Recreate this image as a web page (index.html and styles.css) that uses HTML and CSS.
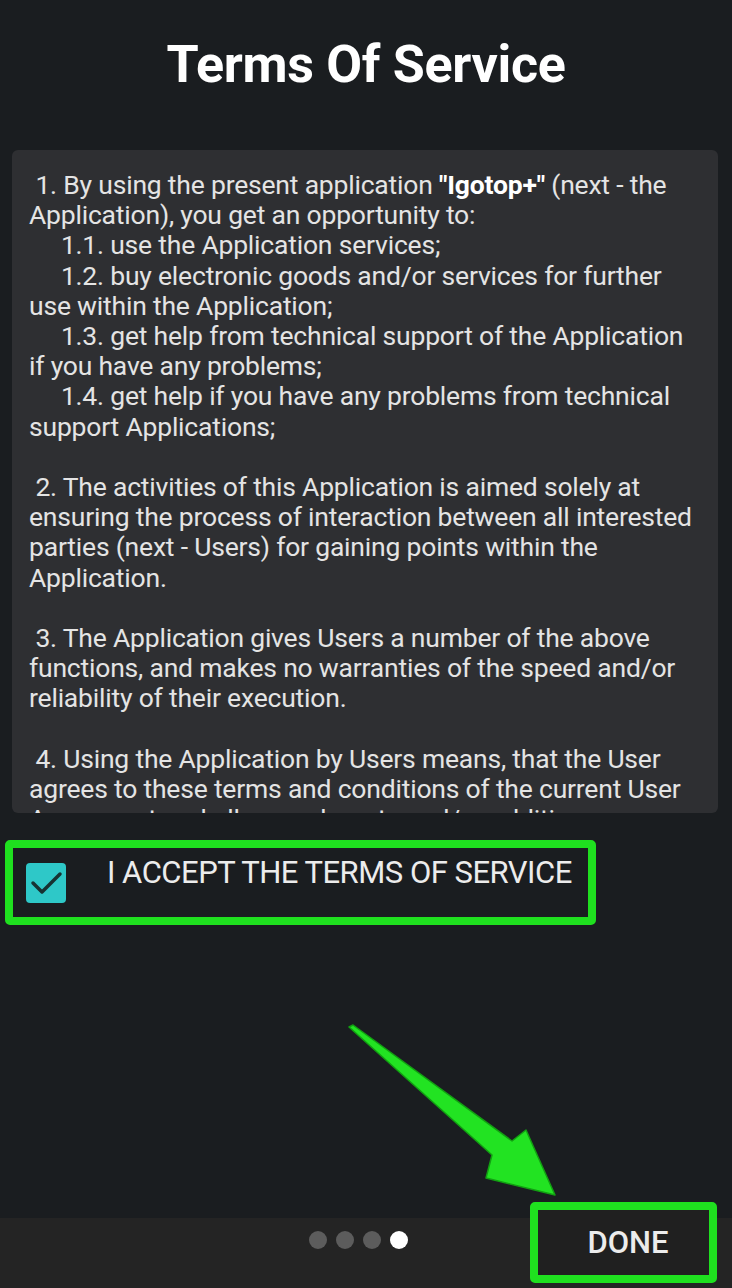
FILE: index.html
```html
<!DOCTYPE html>
<html lang="en">
<head>
  <meta charset="UTF-8" />
  <meta name="viewport" content="width=device-width, initial-scale=1.0"/>
  <title>Terms Of Service</title>
  <link rel="stylesheet" href="styles.css">
</head>
<body>
  <main class="tela">
    <h1 class="titulo">Terms Of Service</h1>

    <div class="termos-box">
      <p class="termos-texto"> 1. By using the present application <b>"Igotop+"</b> (next - the Application), you get an opportunity to:
     1.1. use the Application services;
     1.2. buy electronic goods and/or services for further use within the Application;
     1.3. get help from technical support of the Application if you have any problems;
     1.4. get help if you have any problems from technical support Applications;

 2. The activities of this Application is aimed solely at ensuring the process of interaction between all interested parties (next - Users) for gaining points within the Application.

 3. The Application gives Users a number of the above functions, and makes no warranties of the speed and/or reliability of their execution.

 4. Using the Application by Users means, that the User agrees to these terms and conditions of the current User Agreement and all amendments and/or additions.</p>
    </div>

    <label class="aceitar">
      <span class="checkbox">
        <svg viewBox="0 0 40 40" width="40" height="40">
          <path d="M7 20 L16 29 L34 11" fill="none" stroke="#173232" stroke-width="3.5" stroke-linecap="round" stroke-linejoin="round"/>
        </svg>
      </span>
      <span class="aceitar-texto">I ACCEPT THE TERMS OF SERVICE</span>
    </label>
  </main>

  <footer class="barra">
    <div class="pontos">
      <span class="ponto"></span>
      <span class="ponto"></span>
      <span class="ponto"></span>
      <span class="ponto ativo"></span>
    </div>
    <button class="botao-done">DONE</button>
  </footer>

  <!-- seta de destaque por cima -->
  <svg class="seta" viewBox="0 0 230 190" width="230" height="190">
    <polygon points="9,7 13,5 172,121 186,110 215,175 146,158 152,135" fill="#22e322" stroke="#12a012" stroke-width="1.5" stroke-linejoin="round"/>
  </svg>
</body>
</html>
```

FILE: styles.css
```css
body {
  font-family: Roboto, 'Noto Sans', sans-serif;
  background: #1a1d20;
  color: white;
  margin: 0;
  width: 732px;
  height: 1288px;
  display: flex;
  flex-direction: column;
  position: relative;
  overflow: hidden;
}
.tela {
  flex: 1;
  display: flex;
  flex-direction: column;
}
.titulo {
  font-size: 52px;
  font-weight: 700;
  text-align: center;
  margin: 35px 0 0;
  line-height: 60px;
  letter-spacing: -0.3px;
}
.termos-box {
  background-color: #2e2f32;
  margin: 55px 14px 0 12px;
  height: 663px;
  border-radius: 6px;
  overflow: hidden;
  padding: 20px 22px 0 17px;
  box-sizing: border-box;
}
.termos-texto {
  margin: 0;
  white-space: pre-wrap;
  font-size: 26.5px;
  line-height: 30.2px;
  color: #e4e4e4;
  letter-spacing: -0.2px;
}
.termos-texto b {
  color: white;
}
.aceitar {
  margin: 27px 0 0 5px;
  width: 591px;
  height: 85px;
  box-sizing: border-box;
  border: 8px solid #1fe01f;
  border-radius: 5px;
  display: flex;
  align-items: flex-start;
  padding: 15px 0 0 13px;
}
.checkbox {
  width: 40px;
  height: 40px;
  background: #2ec8c8;
  border-radius: 4px;
  display: flex;
}
.aceitar-texto {
  margin: -9px 0 0 41px;
  font-size: 31px;
  color: #ececec;
  letter-spacing: -0.5px;
}
.barra {
  height: 70px;
  background: #242424;
  display: flex;
  align-items: flex-end;
}
.pontos {
  display: flex;
  gap: 9px;
  margin: 0 0 39px 309px;
}
.ponto {
  width: 18px;
  height: 18px;
  border-radius: 50%;
  background: #5c5c5c;
}
.ponto.ativo {
  background: white;
}
.botao-done {
  margin: 0 15px 5px auto;
  width: 187px;
  height: 81px;
  border: 8px solid #1fe01f;
  border-radius: 5px;
  background: #202020;
  color: #ececec;
  font-family: Roboto, sans-serif;
  font-size: 31px;
  font-weight: 500;
  padding: 0 0 0 9px;
}
.seta {
  position: absolute;
  left: 340px;
  top: 1020px;
}
```
